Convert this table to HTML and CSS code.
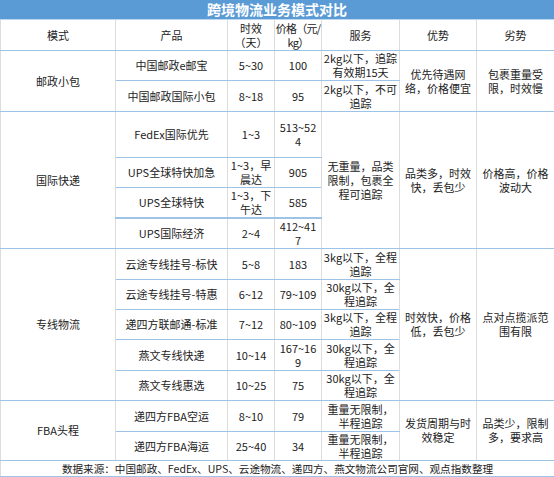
FILE: index.html
```html
<!DOCTYPE html>
<html lang="zh">
<head>
<meta charset="utf-8">
<link rel="stylesheet" href="styles.css">
</head>
<body>
<div class="sheet">
  <div class="title">跨境物流业务模式对比</div>
  <table class="grid">
    <colgroup>
      <col class="c-mode"><col class="c-prod"><col class="c-time"><col class="c-price"><col class="c-svc"><col class="c-pro"><col class="c-con">
    </colgroup>
    <thead>
      <tr class="h30">
        <th>模式</th><th>产品</th><th>时效（天）</th><th class="tight">价格（元/kg）</th><th>服务</th><th>优势</th><th>劣势</th>
      </tr>
    </thead>
    <tbody>
      <tr class="h30">
        <td rowspan="2">邮政小包</td><td>中国邮政e邮宝</td><td>5~30</td><td class="px">100</td><td class="svc">2kg以下，追踪有效期15天</td>
        <td rowspan="2" class="wide">优先待遇网络，价格便宜</td><td rowspan="2" class="wide">包裹重量受限，时效慢</td>
      </tr>
      <tr class="h31">
        <td>中国邮政国际小包</td><td>8~18</td><td class="px">95</td><td class="svc">2kg以下，不可追踪</td>
      </tr>
      <tr class="h46">
        <td rowspan="4">国际快递</td><td>FedEx国际优先</td><td>1~3</td><td class="px">513~524</td>
        <td rowspan="4" class="wide">无重量，品类限制，包裹全程可追踪</td><td rowspan="4" class="wide">品类多，时效快，丢包少</td><td rowspan="4" class="wide">价格高，价格波动大</td>
      </tr>
      <tr class="h30"><td>UPS全球特快加急</td><td>1~3，早晨达</td><td class="px">905</td></tr>
      <tr class="h31"><td>UPS全球特快</td><td>1~3，下午达</td><td class="px">585</td></tr>
      <tr class="h30 thick"><td>UPS国际经济</td><td>2~4</td><td class="px">412~417</td></tr>
      <tr class="h31">
        <td rowspan="5">专线物流</td><td>云途专线挂号-标快</td><td>5~8</td><td class="px">183</td><td class="svc">3kg以下，全程追踪</td>
        <td rowspan="5" class="wide">时效快，价格低，丢包少</td><td rowspan="5" class="wide">点对点揽派范围有限</td>
      </tr>
      <tr class="h30"><td>云途专线挂号-特惠</td><td>6~12</td><td class="px">79~109</td><td class="svc">30kg以下，全程追踪</td></tr>
      <tr class="h30"><td>递四方联邮通-标准</td><td>7~12</td><td class="px">80~109</td><td class="svc">3kg以下，全程追踪</td></tr>
      <tr class="h31"><td>燕文专线快递</td><td>10~14</td><td class="px">167~169</td><td class="svc">30kg以下，全程追踪</td></tr>
      <tr class="h30"><td>燕文专线惠选</td><td>10~25</td><td class="px">75</td><td class="svc">30kg以下，全程追踪</td></tr>
      <tr class="h31">
        <td rowspan="2">FBA头程</td><td>递四方FBA空运</td><td>8~10</td><td class="px">79</td><td class="svc">重量无限制，半程追踪</td>
        <td rowspan="2" class="wide">发货周期与时效稳定</td><td rowspan="2" class="wide">品类少，限制多，要求高</td>
      </tr>
      <tr class="h29"><td>递四方FBA海运</td><td>25~40</td><td class="px">34</td><td class="svc">重量无限制，半程追踪</td></tr>
    </tbody>
    <tfoot>
      <tr class="h16">
        <td colspan="7" class="source">数据来源：中国邮政、FedEx、UPS、云途物流、递四方、燕文物流公司官网、观点指数整理</td>
      </tr>
    </tfoot>
  </table>
</div>
</body>
</html>
```
FILE: styles.css
```css
html, body {
  margin: 0;
  padding: 0;
  background: #ffffff;
}
.sheet {
  width: 554px;
  font-family: "Noto Sans CJK SC", "Noto Sans", sans-serif;
  color: #222222;
}
.title {
  height: 20px;
  line-height: 19px;
  background: #5b9bd5;
  color: #ffffff;
  font-weight: bold;
  font-size: 14px;
  text-align: center;
  box-sizing: border-box;
  border-bottom: 1px solid #bdd7ee;
}
.grid {
  width: 554px;
  border-collapse: collapse;
  table-layout: fixed;
  font-size: 11px;
  line-height: 14px;
}
.c-mode { width: 115px; }
.c-prod { width: 112px; }
.c-time { width: 47px; }
.c-price { width: 47px; }
.c-svc { width: 78px; }
.c-pro { width: 77px; }
.c-con { width: 78px; }
.grid th,
.grid td {
  font-weight: normal;
  text-align: center;
  vertical-align: middle;
  padding: 0;
  border-left: 1px solid #dcdcdc;
  border-right: 1px solid #dcdcdc;
  border-top: 1px solid #9dc3e6;
  border-bottom: 1px solid #9dc3e6;
  word-break: break-all;
}
.grid th.tight {
  letter-spacing: -0.8px;
}
.grid td.px {
  padding: 0 3px;
}
.grid td.svc {
  padding: 0 1px;
}
.grid td.wide {
  padding: 0 2px;
}
.grid thead th {
  border-top: none;
}
.h16 { height: 16px; }
.h29 { height: 29px; }
.h30 { height: 30px; }
.h31 { height: 31px; }
.h46 { height: 46px; }
.thick td {
  border-top: 2px solid #9dc3e6;
}
.grid td.source {
  font-size: 10.6px;
  line-height: 15px;
  white-space: nowrap;
}
```
